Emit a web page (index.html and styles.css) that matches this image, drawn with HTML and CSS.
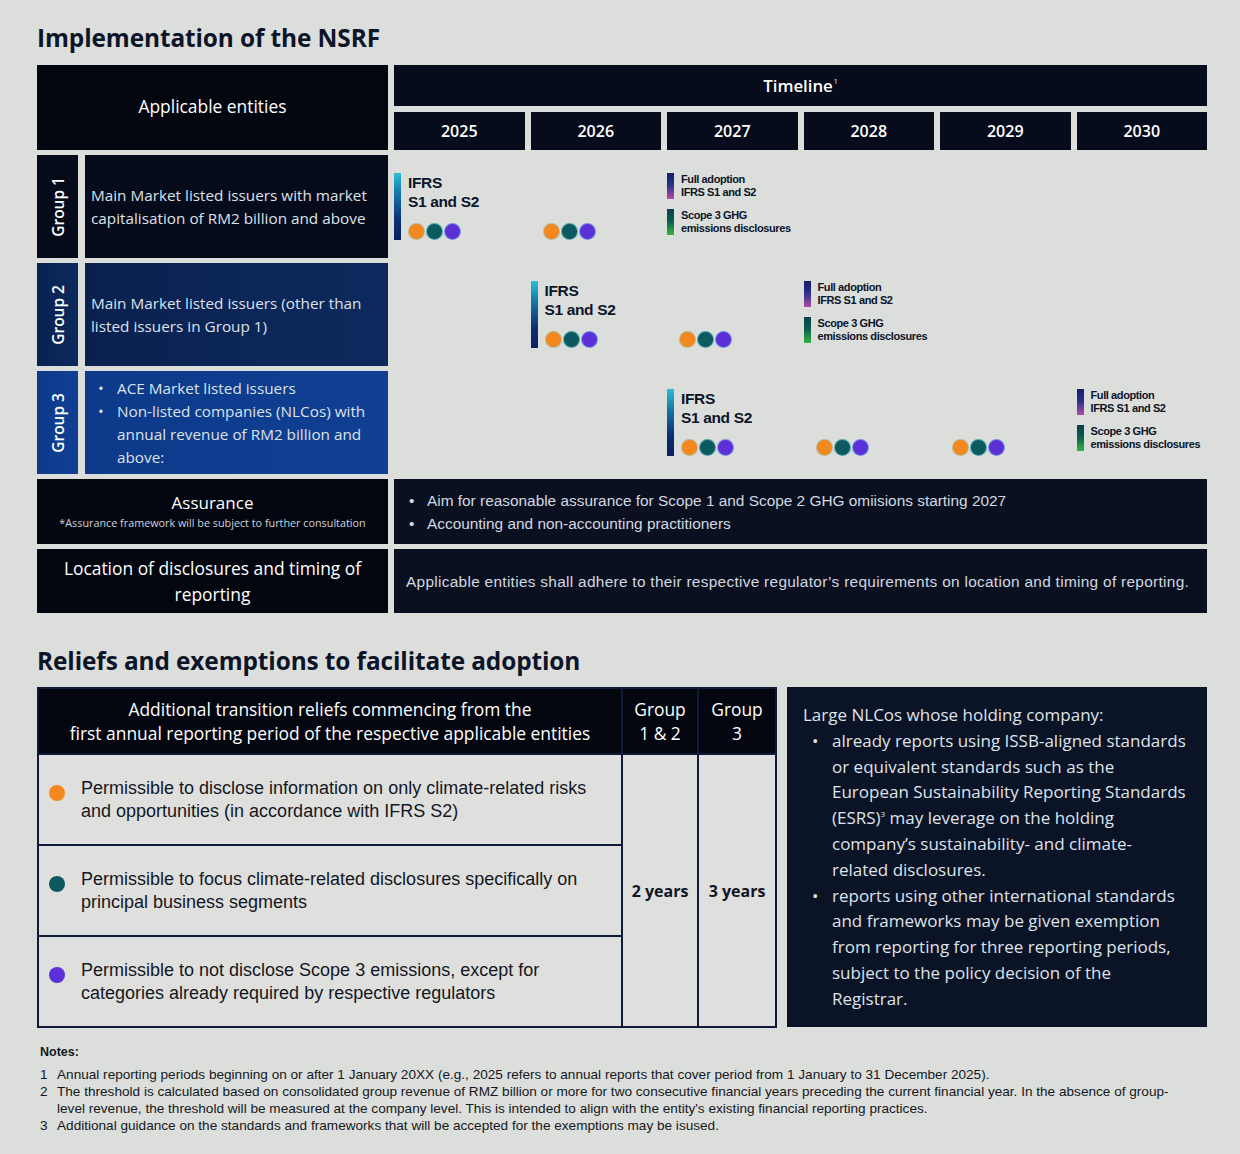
FILE: index.html
```html
<!DOCTYPE html>
<html lang="en">
<head>
<meta charset="utf-8">
<title>Implementation of the NSRF</title>
<link rel="stylesheet" href="styles.css">
</head>
<body>
<main class="page">
  <h1 class="section-title">Implementation of the NSRF</h1>

  <section class="impl">
    <div class="head-left">Applicable entities</div>
    <div class="head-right">
      <div class="timeline-title">Timeline<sup>1</sup></div>
      <div class="years">
        <div class="year">2025</div>
        <div class="year">2026</div>
        <div class="year">2027</div>
        <div class="year">2028</div>
        <div class="year">2029</div>
        <div class="year">2030</div>
      </div>
    </div>

    <!-- Group 1 -->
    <div class="entity g1">
      <div class="glabel"><span>Group 1</span></div>
      <div class="gdesc"><p>Main Market listed issuers with market<br>capitalisation of RM2 billion and above</p></div>
    </div>
    <div class="track">
      <div class="slot col-1">
        <div class="ifrs">
          <span class="bar bar-ifrs"></span>
          <div class="ifrs-body">
            <div class="ifrs-text">IFRS<br>S1 and S2</div>
            <div class="dots"><i class="dot orange"></i><i class="dot teal"></i><i class="dot purple"></i></div>
          </div>
        </div>
      </div>
      <div class="slot col-2 dots-only">
        <div class="dots"><i class="dot orange"></i><i class="dot teal"></i><i class="dot purple"></i></div>
      </div>
      <div class="slot col-3">
        <div class="milestones">
          <div class="ms"><span class="bar bar-full"></span><span class="ms-text">Full adoption<br>IFRS S1 and S2</span></div>
          <div class="ms"><span class="bar bar-scope"></span><span class="ms-text">Scope 3 GHG<br>emissions disclosures</span></div>
        </div>
      </div>
    </div>

    <!-- Group 2 -->
    <div class="entity g2">
      <div class="glabel"><span>Group 2</span></div>
      <div class="gdesc"><p>Main Market listed issuers (other than<br>listed issuers in Group 1)</p></div>
    </div>
    <div class="track">
      <div class="slot col-2">
        <div class="ifrs">
          <span class="bar bar-ifrs"></span>
          <div class="ifrs-body">
            <div class="ifrs-text">IFRS<br>S1 and S2</div>
            <div class="dots"><i class="dot orange"></i><i class="dot teal"></i><i class="dot purple"></i></div>
          </div>
        </div>
      </div>
      <div class="slot col-3 dots-only">
        <div class="dots"><i class="dot orange"></i><i class="dot teal"></i><i class="dot purple"></i></div>
      </div>
      <div class="slot col-4">
        <div class="milestones">
          <div class="ms"><span class="bar bar-full"></span><span class="ms-text">Full adoption<br>IFRS S1 and S2</span></div>
          <div class="ms"><span class="bar bar-scope"></span><span class="ms-text">Scope 3 GHG<br>emissions disclosures</span></div>
        </div>
      </div>
    </div>

    <!-- Group 3 -->
    <div class="entity g3">
      <div class="glabel"><span>Group 3</span></div>
      <div class="gdesc">
        <ul class="glist">
          <li>ACE Market listed issuers</li>
          <li>Non-listed companies (NLCos) with<br>annual revenue of RM2 billion and<br>above:</li>
        </ul>
      </div>
    </div>
    <div class="track">
      <div class="slot col-3">
        <div class="ifrs">
          <span class="bar bar-ifrs"></span>
          <div class="ifrs-body">
            <div class="ifrs-text">IFRS<br>S1 and S2</div>
            <div class="dots"><i class="dot orange"></i><i class="dot teal"></i><i class="dot purple"></i></div>
          </div>
        </div>
      </div>
      <div class="slot col-4 dots-only">
        <div class="dots"><i class="dot orange"></i><i class="dot teal"></i><i class="dot purple"></i></div>
      </div>
      <div class="slot col-5 dots-only">
        <div class="dots"><i class="dot orange"></i><i class="dot teal"></i><i class="dot purple"></i></div>
      </div>
      <div class="slot col-6">
        <div class="milestones">
          <div class="ms"><span class="bar bar-full"></span><span class="ms-text">Full adoption<br>IFRS S1 and S2</span></div>
          <div class="ms"><span class="bar bar-scope"></span><span class="ms-text">Scope 3 GHG<br>emissions disclosures</span></div>
        </div>
      </div>
    </div>

    <!-- Assurance -->
    <div class="row-label">
      <div class="assure-title">Assurance</div>
      <div class="assure-note">*Assurance framework will be subject to further consultation</div>
    </div>
    <div class="row-body assure-body">
      <ul class="blist">
        <li>Aim for reasonable assurance for Scope 1 and Scope 2 GHG omiisions starting 2027</li>
        <li>Accounting and non-accounting practitioners</li>
      </ul>
    </div>

    <!-- Location -->
    <div class="row-label">
      <div class="loc-title">Location of disclosures and timing of<br>reporting</div>
    </div>
    <div class="row-body loc-body">
      <p>Applicable entities shall adhere to their respective regulator’s requirements on location and timing of reporting.</p>
    </div>
  </section>

  <h2 class="section-title reliefs-title">Reliefs and exemptions to facilitate adoption</h2>

  <section class="reliefs">
    <table class="relief-table">
      <colgroup>
        <col class="c-main">
        <col class="c-g12">
        <col class="c-g3">
      </colgroup>
      <thead>
        <tr>
          <th>Additional transition reliefs commencing from the<br>first annual reporting period of the respective applicable entities</th>
          <th>Group<br>1 &amp; 2</th>
          <th>Group<br>3</th>
        </tr>
      </thead>
      <tbody>
        <tr>
          <td class="relief"><div class="relief-item"><i class="rdot orange"></i><span>Permissible to disclose information on only climate-related risks<br>and opportunities (in accordance with IFRS S2)</span></div></td>
          <td class="years-cell" rowspan="3">2 years</td>
          <td class="years-cell" rowspan="3">3 years</td>
        </tr>
        <tr>
          <td class="relief"><div class="relief-item"><i class="rdot teal"></i><span>Permissible to focus climate-related disclosures specifically on<br>principal business segments</span></div></td>
        </tr>
        <tr>
          <td class="relief"><div class="relief-item"><i class="rdot purple"></i><span>Permissible to not disclose Scope 3 emissions, except for<br>categories already required by respective regulators</span></div></td>
        </tr>
      </tbody>
    </table>

    <div class="nlco">
      <p>Large NLCos whose holding company:</p>
      <ul class="nlist">
        <li>already reports using ISSB-aligned standards<br>or equivalent standards such as the<br>European Sustainability Reporting Standards<br>(ESRS)<sup>3</sup> may leverage on the holding<br>company’s sustainability- and climate-<br>related disclosures.</li>
        <li>reports using other international standards<br>and frameworks may be given exemption<br>from reporting for three reporting periods,<br>subject to the policy decision of the<br>Registrar.</li>
      </ul>
    </div>
  </section>

  <section class="notes">
    <h3 class="notes-title">Notes:</h3>
    <ol class="notes-list">
      <li><span class="num">1</span><span>Annual reporting periods beginning on or after 1 January 20XX (e.g., 2025 refers to annual reports that cover period from 1 January to 31 December 2025).</span></li>
      <li><span class="num">2</span><span>The threshold is calculated based on consolidated group revenue of RMZ billion or more for two consecutive financial years preceding the current financial year. In the absence of group-<br>level revenue, the threshold will be measured at the company level. This is intended to align with the entity's existing financial reporting practices.</span></li>
      <li><span class="num">3</span><span>Additional guidance on the standards and frameworks that will be accepted for the exemptions may be isused.</span></li>
    </ol>
  </section>
</main>
</body>
</html>
```

FILE: styles.css
```css
* {
  box-sizing: border-box;
  margin: 0;
  padding: 0;
}

body {
  background: #dcdedc;
  font-family: "Open Sans", "Noto Sans", sans-serif;
  color: #0d1526;
}

.page {
  width: 1240px;
  padding: 21px 33px 0 37px;
}

.section-title {
  font-size: 24.4px;
  font-weight: 700;
  line-height: 34px;
  color: #0c1428;
  letter-spacing: -0.1px;
}

/* ---------- Implementation grid ---------- */
.impl {
  display: grid;
  grid-template-columns: 351px 813px;
  grid-template-rows: 85px 103px 103px 103px 65px 64px;
  column-gap: 6px;
  row-gap: 5px;
  margin-top: 10px;
}

.head-left {
  background: #03060f;
  color: #fff;
  display: flex;
  align-items: center;
  justify-content: center;
  font-size: 17.4px;
  padding-bottom: 4px;
}

.head-right {
  display: flex;
  flex-direction: column;
  gap: 6px;
}

.timeline-title {
  height: 41px;
  background: #070c1c;
  color: #fff;
  display: flex;
  align-items: center;
  justify-content: center;
  font-size: 16.8px;
  font-weight: 600;
}

.timeline-title sup {
  font-size: 7px;
  font-weight: 400;
  align-self: flex-start;
  margin-top: 12px;
  margin-left: 1px;
}

.years {
  display: grid;
  grid-template-columns: repeat(6, 1fr);
  gap: 6px;
  height: 38px;
}

.year {
  background: #070c1c;
  color: #fff;
  font-weight: 600;
  font-size: 16px;
  display: flex;
  align-items: center;
  justify-content: center;
}

.entity {
  display: flex;
  gap: 7px;
}

.glabel {
  width: 41px;
  flex: none;
  display: flex;
  align-items: center;
  justify-content: center;
}

.glabel span {
  writing-mode: vertical-rl;
  transform: rotate(180deg);
  color: #fff;
  font-weight: 600;
  font-size: 15.5px;
}

.gdesc {
  flex: 1;
  display: flex;
  align-items: center;
  padding: 0 6px;
  color: #dde2ea;
  font-size: 15.3px;
  line-height: 23px;
}

.g1 .glabel,
.g1 .gdesc {
  background: #060b1b;
}

.g2 .glabel,
.g2 .gdesc {
  background: linear-gradient(90deg, #0a2150, #0c2a5e);
}

.g3 .glabel,
.g3 .gdesc {
  background: linear-gradient(90deg, #0d3a8a, #103f93);
}

.glist {
  list-style: none;
  padding-left: 3px;
}

.glist li {
  position: relative;
  padding-left: 23px;
}

.glist li::before {
  content: "•";
  position: absolute;
  left: 4px;
  top: 0;
}

/* timeline track */
.track {
  display: grid;
  grid-template-columns: repeat(6, 1fr);
  column-gap: 6px;
}

.slot {
  padding-top: 18px;
}

.col-1 { grid-column: 1; }
.col-2 { grid-column: 2; }
.col-3 { grid-column: 3; }
.col-4 { grid-column: 4; }
.col-5 { grid-column: 5; }
.col-6 { grid-column: 6; }

.ifrs {
  display: flex;
  gap: 7px;
}

.bar {
  display: block;
  width: 7px;
  flex: none;
}

.bar-ifrs {
  background: linear-gradient(180deg, #2bbdd0 0%, #1578a8 30%, #0c2e72 70%, #0a2260 100%);
}

.ifrs-text {
  font-family: "Liberation Sans", Arial, sans-serif;
  font-weight: 700;
  font-size: 15.5px;
  line-height: 19px;
  letter-spacing: -0.35px;
  color: #0b1428;
  white-space: nowrap;
}

.dots {
  display: flex;
  gap: 1px;
  margin-top: 12px;
}

.dots-only {
  padding-top: 68px;
  padding-left: 12px;
}

.dots-only .dots {
  margin-top: 0;
}

.dot {
  display: block;
  width: 17px;
  height: 17px;
  border-radius: 50%;
  border: 1px solid rgba(140, 225, 235, 0.55);
}

.orange { background: #f4871e; }
.teal { background: #0d5960; }
.purple { background: #5b30d8; }

.milestones {
  display: flex;
  flex-direction: column;
  gap: 10px;
}

.ms {
  display: flex;
  gap: 7px;
}

.ms .bar {
  height: 26px;
}

.bar-full {
  background: linear-gradient(180deg, #141d6c 0%, #25308a 45%, #b14ca6 100%);
}

.bar-scope {
  background: linear-gradient(180deg, #0a3e4a 0%, #0d5a52 45%, #32b441 100%);
}

.ms-text {
  font-family: "Liberation Sans", Arial, sans-serif;
  font-weight: 700;
  font-size: 11px;
  line-height: 13px;
  letter-spacing: -0.4px;
  color: #0b1428;
  white-space: nowrap;
}

/* label rows */
.row-label {
  background: #03060f;
  color: #fff;
  display: flex;
  flex-direction: column;
  align-items: center;
  justify-content: center;
  text-align: center;
}

.assure-title {
  font-size: 17px;
  line-height: 22px;
}

.assure-note {
  font-size: 10.8px;
  line-height: 18px;
  color: #cfd4dc;
}

.loc-title {
  font-size: 17.4px;
  line-height: 26px;
}

.row-body {
  background: #0a1020;
  color: #d3d8e0;
  font-family: "Liberation Sans", Arial, sans-serif;
  font-size: 15.4px;
  line-height: 23px;
  display: flex;
  align-items: center;
  padding: 0 12px;
}

.loc-body {
  letter-spacing: 0.3px;
}

.blist {
  list-style: none;
}

.blist li {
  position: relative;
  padding-left: 21px;
}

.blist li::before {
  content: "•";
  position: absolute;
  left: 3px;
  top: 0;
}

/* ---------- Reliefs ---------- */
.reliefs-title {
  margin-top: 31px;
}

.reliefs {
  display: flex;
  gap: 10px;
  margin-top: 9px;
}

.relief-table {
  width: 738px;
  height: 340px;
  border-collapse: collapse;
  table-layout: fixed;
  flex: none;
}

.c-main { width: 584px; }
.c-g12 { width: 76px; }
.c-g3 { width: 78px; }

.relief-table th,
.relief-table td {
  border: 2px solid #0d1a38;
}

.relief-table th {
  height: 66px;
  background: #03060f;
  color: #fff;
  font-weight: 400;
  font-size: 17.4px;
  line-height: 24px;
  text-align: center;
  vertical-align: middle;
}

.relief-table td {
  background: #dfe0de;
  vertical-align: middle;
}

.relief {
  height: 91px;
  padding-left: 10px;
}

.relief-item {
  display: flex;
  align-items: flex-start;
  gap: 16px;
  font-family: "Liberation Sans", Arial, sans-serif;
  font-size: 18px;
  line-height: 23px;
  color: #13171f;
}

.rdot {
  display: block;
  width: 16px;
  height: 16px;
  border-radius: 50%;
  flex: none;
  margin-top: 8px;
}

.years-cell {
  text-align: center;
  font-weight: 700;
  font-size: 16px;
  color: #101623;
}

.nlco {
  flex: 1;
  height: 340px;
  background: #0b1326;
  padding: 15px 8px 0 16px;
  color: #dfe3ea;
  font-size: 17px;
  line-height: 25.8px;
}

.nlist {
  list-style: none;
  padding-left: 29px;
}

.nlist li {
  position: relative;
  white-space: nowrap;
}

.nlist li::before {
  content: "•";
  position: absolute;
  left: -20px;
  top: 0;
}

.nlist sup {
  font-size: 8px;
  line-height: 0;
  vertical-align: 7px;
}

/* ---------- Notes ---------- */
.notes {
  margin-top: 16px;
  padding-left: 3px;
  font-family: "Liberation Sans", Arial, sans-serif;
  color: #141821;
}

.notes-title {
  font-size: 12.5px;
  font-weight: 700;
  line-height: 17px;
  margin-bottom: 5px;
}

.notes-list {
  list-style: none;
  font-size: 13.6px;
  line-height: 17px;
}

.notes-list li {
  display: grid;
  grid-template-columns: 17px 1fr;
}
```
